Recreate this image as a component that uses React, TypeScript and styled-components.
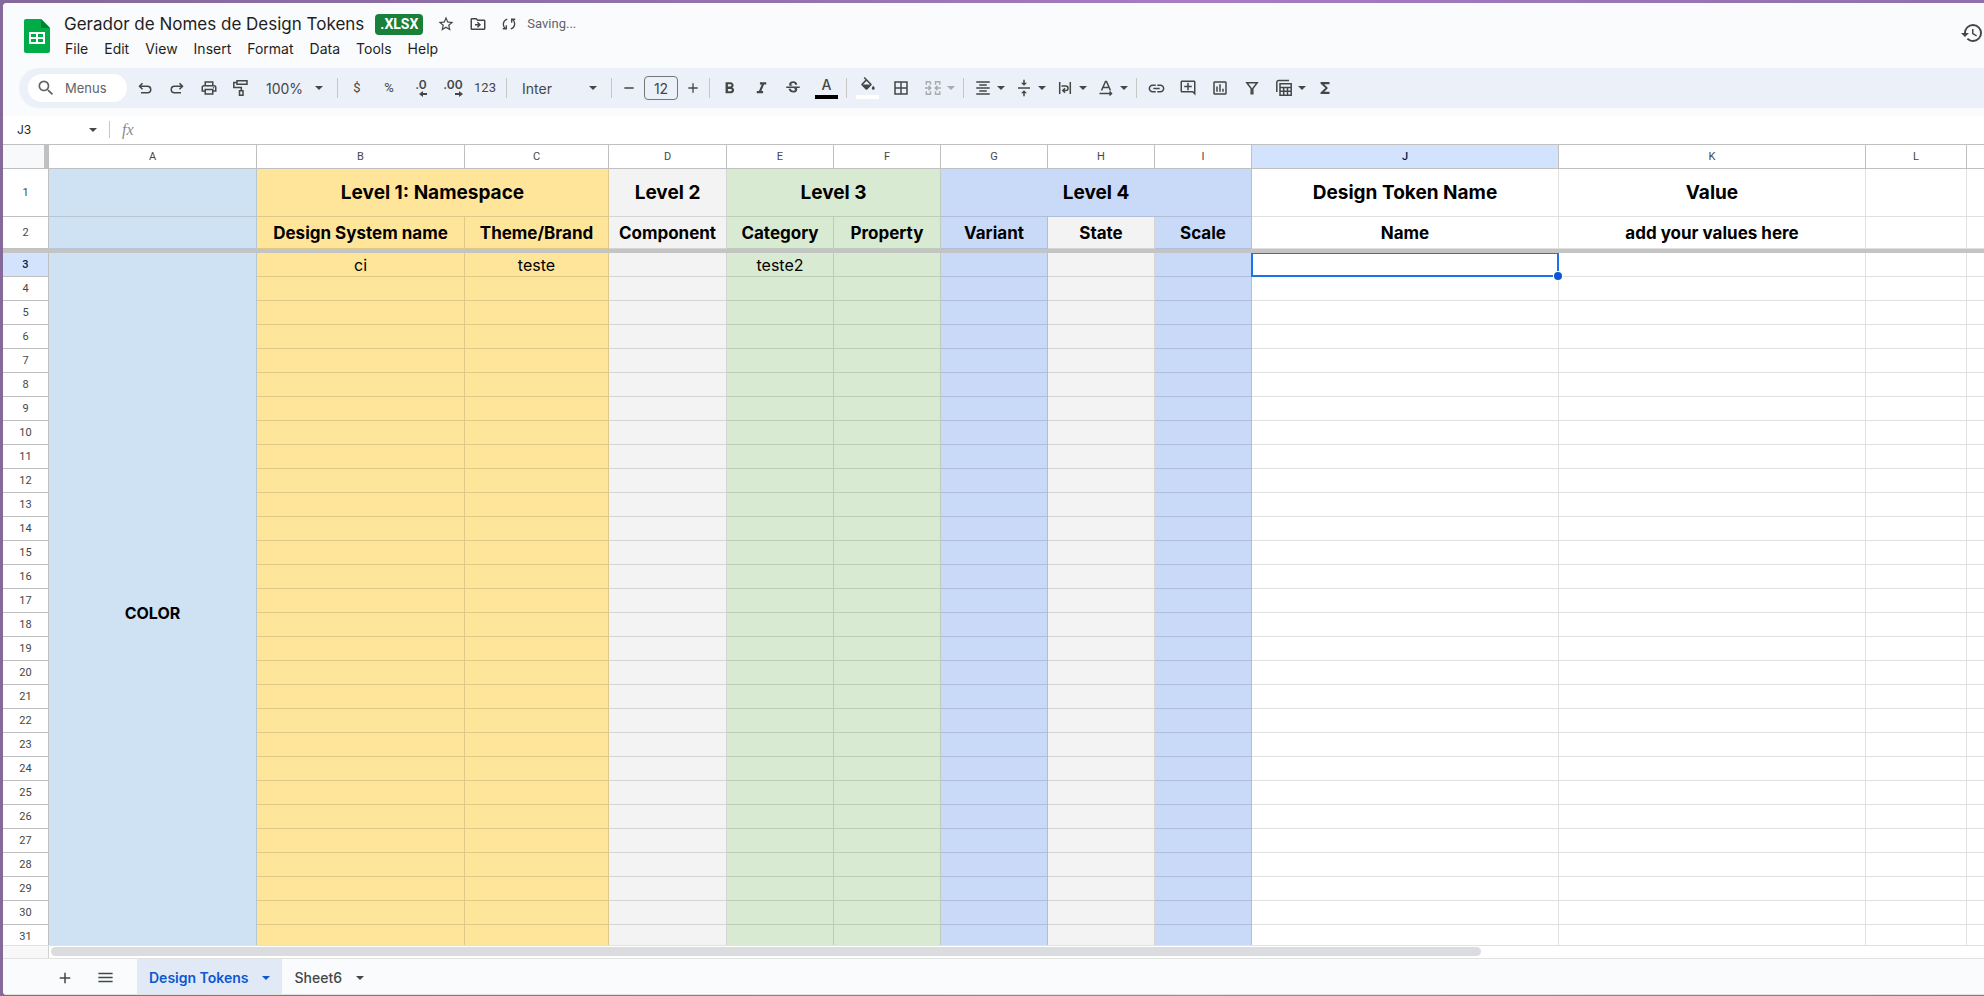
import React from "react";
import styled, { createGlobalStyle } from "styled-components";
import {
  MdAdd,
  MdBorderAll,
  MdFormatAlignCenter,
  MdFormatBold,
  MdFormatItalic,
  MdFunctions,
  MdHistory,
  MdLink,
  MdMenu,
  MdOutlineAddComment,
  MdOutlineDriveFileMove,
  MdOutlineFilterAlt,
  MdOutlineInsertChart,
  MdOutlinePrint,
  MdRemove,
  MdSearch,
  MdStarBorder,
  MdStrikethroughS,
  MdVerticalAlignCenter,
} from "react-icons/md";

const ui = '"Inter", "Liberation Sans", sans-serif';
const small = '"Roboto", "Liberation Sans", sans-serif';

const GlobalStyle = createGlobalStyle`
  *, *::before, *::after { box-sizing: border-box; }
  body { margin: 0; font-family: ${ui}; color: #1f1f1f; }
  button, input { font: inherit; color: inherit; border: 0; padding: 0; background: none; outline: 0; }
  svg { display: block; flex: none; }
`;

const Desktop = styled.div`
  height: 100vh;
  padding: 3px 0 1px 3px;
  background: linear-gradient(90deg, #84699a, #9472b0 40%, #a77cc4 60%, #8e70ad);
`;

const Window = styled.div`
  display: flex;
  flex-direction: column;
  height: 100%;
  overflow: hidden;
  border-radius: 4px 0 0 4px;
  background: #fff;
`;

const Header = styled.header`
  flex: none;
  height: 113px;
  padding-bottom: 8px;
  background: #f9fbfd;
  display: flex;
  flex-direction: column;
`;

const TopBar = styled.div`
  flex: 1;
  display: flex;
  align-items: flex-start;
  padding: 9px 0 0 21px;
`;

const LogoLink = styled.a`
  display: block;
  padding-top: 7px;
  margin-right: 8px;
`;

const Titles = styled.div`
  flex: 1;
`;

const TitleRow = styled.div`
  display: flex;
  align-items: center;
  height: 24px;
  padding: 0 6px;
  color: #444746;
`;

const DocTitle = styled.h1`
  margin: 0;
  font-size: 17px;
  font-weight: 400;
  line-height: 24px;
  color: #1f1f1f;
`;

const FileBadge = styled.span`
  margin: 0 14px 0 11px;
  padding: 0 5px;
  border-radius: 4px;
  background: #188038;
  color: #fff;
  font: 700 14px/21px ${small};
`;

const TitleButton = styled.button`
  margin-right: 14px;
`;

const SaveState = styled.span`
  margin-left: -4px;
  font: 13px/20px ${small};
  color: #5f6368;
`;

const MenuBar = styled.nav`
  display: flex;
  height: 25px;
  padding-top: 1px;
  margin-left: -1px;
`;

const MenuButton = styled.button`
  padding: 0 8px;
  font-size: 14px;
  line-height: 24px;
`;

const HistoryButton = styled.button`
  margin-top: 9px;
  color: #444746;
`;

const Toolbar = styled.div`
  display: flex;
  align-items: center;
  gap: 4px;
  height: 40px;
  margin-left: 16px;
  padding-left: 9px;
  border-radius: 20px 0 0 20px;
  background: #ecf0f9;
  color: #444746;
  white-space: nowrap;
`;

const SearchPill = styled.button`
  display: flex;
  align-items: center;
  gap: 9px;
  width: 99px;
  height: 28px;
  padding-left: 8px;
  border-radius: 14px;
  background: #fff;
  font-size: 13px;
  color: #5f6368;
`;

const Tool = styled.button<{ $wide?: boolean; $off?: boolean }>`
  display: flex;
  align-items: center;
  justify-content: center;
  flex: none;
  width: ${(p) => (p.$wide ? 31 : 28)}px;
  height: 28px;
  opacity: ${(p) => (p.$off ? 0.4 : 1)};
  font-size: 13px;
`;

const NumberTool = styled(Tool)`
  font: 13px/16px ${small};
`;

const MenuTool = styled(Tool)`
  width: 37px;
  justify-content: flex-start;
  padding-left: 5px;
  gap: 5px;
`;

const PickerTool = styled(Tool)<{ $w: number }>`
  width: ${(p) => p.$w}px;
  justify-content: space-between;
  padding: 0 7px;
  font-size: 14px;
`;

const FontTool = styled(PickerTool)`
  padding-left: 10px;
`;

const Divider = styled.span<{ $tight?: boolean }>`
  flex: none;
  width: 1px;
  height: 20px;
  margin: 0 1px 0 ${(p) => (p.$tight ? 0 : 3)}px;
  background: #c7c7c7;
`;

const SizeGroup = styled.div`
  display: flex;
  align-items: center;
  gap: 3px;
`;

const StepButton = styled.button`
  display: flex;
  justify-content: center;
  width: 24px;
`;

const SizeInput = styled.input`
  width: 34px;
  height: 24px;
  border: 1px solid #747775;
  border-radius: 4px;
  text-align: center;
  font-size: 14px;
`;

const ColorTool = styled.span<{ $bar: string }>`
  display: flex;
  flex-direction: column;
  align-items: center;
  justify-content: flex-start;
  width: 23px;
  height: 22px;
  border-bottom: 4px solid ${(p) => p.$bar};
  font-size: 14px;
  font-weight: 500;
  line-height: 16px;
`;

const Decimal = styled.span`
  display: flex;
  flex-direction: column;
  align-items: flex-end;
  font-size: 12px;
  font-weight: 600;
  line-height: 12px;
`;

const FormulaBar = styled.div`
  flex: none;
  display: flex;
  align-items: center;
  height: 29px;
  padding-bottom: 1px;
  border-bottom: 1px solid #c0c0c0;
  color: #444746;
`;

const NameBox = styled.input`
  width: 76px;
  padding-left: 14px;
  font-size: 12px;
  color: #1f1f1f;
`;

const NameDivider = styled(Divider)`
  height: 17px;
  margin: 0 12px 0 2px;
`;

const FormulaMark = styled.span`
  font: italic 16px/20px "Liberation Serif", serif;
  color: #8a8d8f;
`;

const FormulaInput = styled.input`
  flex: 1;
  padding-left: 8px;
`;

const GridArea = styled.main`
  flex: 1;
  min-height: 0;
  overflow: hidden;
  border-bottom: 1px solid #e1e1e1;
`;

const Sheet = styled.table`
  width: 100%;
  table-layout: fixed;
  border-collapse: separate;
  border-spacing: 0;

  th, td {
    padding: 0;
    text-align: center;
    vertical-align: middle;
    white-space: nowrap;
  }

  th:last-child, td:last-child {
    border-right: 0;
  }
`;

const Corner = styled.td`
  height: 24px;
  background: #f8f9fa;
  border-right: 5px solid #c0c0c0;
  border-bottom: 1px solid #c0c0c0;
`;

const Label = styled.th<{ $active?: boolean }>`
  border-right: 1px solid #c0c0c0;
  border-bottom: 1px solid #c0c0c0;
  background: ${(p) => (p.$active ? "#d3e3fd" : "#fff")};
  color: ${(p) => (p.$active ? "#041e49" : "#444746")};
  font: ${(p) => (p.$active ? 500 : 400)} 11px/12px ${small};
`;

const Row = styled.tr<{ $h: number }>`
  height: ${(p) => p.$h}px;
`;

const textSize = { level: 19, title: 17, group: 16 };

const Cell = styled.td<{ $fill: string; $kind?: keyof typeof textSize }>`
  position: relative;
  border-right: 1px solid rgba(0, 0, 0, 0.12);
  border-bottom: 1px solid rgba(0, 0, 0, 0.12);
  background: ${(p) => p.$fill};
  font-size: ${(p) => (p.$kind ? textSize[p.$kind] : 16)}px;
  font-weight: ${(p) => (p.$kind ? 700 : 400)};
  line-height: 20px;
  color: #000;
`;

const FreezeBar = styled.td`
  height: 4px;
  background: #c4c4c4;
`;

const Selection = styled.span`
  position: absolute;
  z-index: 1;
  inset: 0 -1px -1px -1px;
  border: 2px solid #1a73e8;
  border-top-width: 1px;

  &::after {
    content: "";
    position: absolute;
    right: -5px;
    bottom: -5px;
    width: 8px;
    height: 8px;
    border-radius: 50%;
    background: #0b57d0;
    box-shadow: 0 0 0 1px #fff;
  }
`;

const ScrollRow = styled.div`
  flex: none;
  display: flex;
  height: 12px;
`;

const ScrollCorner = styled.div`
  width: 46px;
  border-right: 1px solid #d0d0d0;
  background: #f8f8f8;
`;

const ScrollTrack = styled.div`
  flex: 1;
  padding: 1px 0 2px 2px;
`;

const ScrollThumb = styled.div`
  width: 74%;
  height: 9px;
  border-radius: 5px;
  background: #dadce0;
`;

const Footer = styled.footer`
  flex: none;
  display: flex;
  height: 37px;
  padding-left: 50px;
  border-top: 1px solid #e1e3e1;
  border-bottom: 1px solid #e1e3e1;
  background: #f9fbfd;
  color: #444746;
`;

const FooterButton = styled.button`
  display: flex;
  align-items: center;
  justify-content: center;
  width: 24px;
  margin-right: 16px;
  padding-top: 2px;
`;

const SheetTab = styled.button<{ $active?: boolean }>`
  display: flex;
  align-items: center;
  gap: 14px;
  padding: 2px 12px 0;
  background: ${(p) => (p.$active ? "#e1e9f7" : "none")};
  color: ${(p) => (p.$active ? "#0b57d0" : "#444746")};
  font-size: 14px;
  font-weight: ${(p) => (p.$active ? 600 : 500)};
`;

const TabList = styled.div`
  display: flex;
  margin-left: 4px;
`;

const Caret = () => (
  <svg width="8" height="4" viewBox="0 0 8 4" fill="currentColor" aria-hidden="true">
    <path d="M0 0h8L4 4z" />
  </svg>
);

const Drawn = ({ children, size = 18 }: { children: React.ReactNode; size?: number }) => (
  <svg width={size} height={size} viewBox="0 0 18 18" fill="none" stroke="currentColor" strokeWidth="1.5" aria-hidden="true">
    {children}
  </svg>
);

const UndoIcon = () => (
  <Drawn>
    <path d="M6.500 4.300 3.500 7.300l3 3M3.500 7.300H11.500a3.200 3.200 0 0 1 0 6.500H5" />
  </Drawn>
);

const RedoIcon = () => (
  <Drawn>
    <path d="m11.500 4.300 3 3-3 3M14.500 7.300H6.500a3.200 3.200 0 0 0 0 6.500H13" />
  </Drawn>
);

const RollerIcon = () => (
  <Drawn>
    <path d="M5 1.800h10v3.500H5zM5 3.500H1.800V8.500h7.500v3M7.500 11.800h3.500v4.500H7.500z" />
  </Drawn>
);

const BucketIcon = () => (
  <svg width="18" height="15" viewBox="0 0 24 20" fill="currentColor" fillRule="evenodd" aria-hidden="true">
    <path d="M16.560 8.940 7.620 0 6.210 1.410l2.380 2.380-5.150 5.150a1.490 1.490 0 0 0 0 2.120l5.500 5.500c.290.290.680.440 1.060.440s.770-.150 1.060-.440l5.500-5.500c.590-.580.590-1.530 0-2.120zM5.210 10 10 5.210 14.790 10zM19 11.500s-2 2.170-2 3.500c0 1.100.900 2 2 2s2-.900 2-2c0-1.330-2-3.500-2-3.500z" />
  </svg>
);

const MergeIcon = () => (
  <Drawn>
    <path d="M6.500 2.800H2.300v3M2.300 12.200v3h4.200v-3M6.500 2.800v3M11.500 5.800v-3h4.200v3M11.500 12.200v3h4.200v-3M1 9h5M17 9h-5M4.500 6.800 6.700 9l-2.200 2.200M13.500 6.800 11.300 9l2.200 2.200" />
  </Drawn>
);

const WrapIcon = () => (
  <Drawn>
    <path d="M3.700 3v12M14.300 3v12M5.500 7h4.300a2.200 2.200 0 0 1 0 4.500H7M9 9.300l-2.200 2.200L9 13.700" />
  </Drawn>
);

const RotateIcon = () => (
  <Drawn>
    <path d="M4.500 11.500 8.500 2.500h1l4 9M6 8.500h6M2.500 14.500h12M12.500 12.500l2 2-2 2" />
  </Drawn>
);

const TableViewsIcon = () => (
  <Drawn>
    <path d="M1.800 13V3.500a2 2 0 0 1 2-2H14M5 4.800h11.200v11.400H5zM5 8.500h11.200M5 12.300h11.200M8.700 8.500v7.700M12.500 8.500v7.700" />
  </Drawn>
);

const FilterIcon = () => (
  <Drawn>
    <path d="M3.800 3.800h10.400L9.800 9.500v5.200H8.200V9.500z" />
  </Drawn>
);

const SavingIcon = () => (
  <Drawn size={16}>
    <path d="M7 3.500A6 6 0 0 0 5 14M2 14.300h4V10.500M11 14.500A6 6 0 0 0 13 4M16 3.700h-4V7.500" />
  </Drawn>
);

const ArrowMark = ({ right }: { right?: boolean }) => (
  <svg width="8" height="6" viewBox="0 0 8 6" fill="currentColor" aria-hidden="true">
    <path d={right ? "M0 2h4V0l4 3-4 3V4H0z" : "M8 2H4V0L0 3l4 3V4h4z"} />
  </svg>
);

const SheetsLogo = () => (
  <svg width="26" height="34" viewBox="0 0 26 34" aria-hidden="true">
    <path d="M2 0h15l9 9v23a2 2 0 0 1-2 2H2a2 2 0 0 1-2-2V2a2 2 0 0 1 2-2z" fill="#00ac47" />
    <path d="M17 0v7a2 2 0 0 0 2 2h7z" fill="#00832d" />
    <path d="M5 13v12h16V13zm2 2h5v3H7zm7 0h5v3h-5zm-7 5h5v3H7zm7 0h5v3h-5z" fill="#fff" fillRule="evenodd" />
  </svg>
);

const menus = ["File", "Edit", "View", "Insert", "Format", "Data", "Tools", "Help"];

const sky = "#cfe2f3";
const yellow = "#ffe599";
const grey = "#f3f3f3";
const green = "#d9ead3";
const blue = "#c9daf8";
const white = "#ffffff";

const columns = [
  { id: "A", width: 208, fill: sky, title: "" },
  { id: "B", width: 208, fill: yellow, title: "Design System name" },
  { id: "C", width: 144, fill: yellow, title: "Theme/Brand" },
  { id: "D", width: 118, fill: grey, title: "Component" },
  { id: "E", width: 107, fill: green, title: "Category" },
  { id: "F", width: 107, fill: green, title: "Property" },
  { id: "G", width: 107, fill: blue, title: "Variant" },
  { id: "H", width: 107, fill: grey, title: "State" },
  { id: "I", width: 97, fill: blue, title: "Scale" },
  { id: "J", width: 307, fill: white, title: "Name" },
  { id: "K", width: 307, fill: white, title: "add your values here" },
  { id: "L", width: 101, fill: white, title: "" },
  { id: "M", width: undefined, fill: white, title: "" },
];

const levels = [
  { text: "", span: 1, fill: sky },
  { text: "Level 1: Namespace", span: 2, fill: yellow },
  { text: "Level 2", span: 1, fill: grey },
  { text: "Level 3", span: 2, fill: green },
  { text: "Level 4", span: 3, fill: blue },
  { text: "Design Token Name", span: 1, fill: white },
  { text: "Value", span: 1, fill: white },
  { text: "", span: 1, fill: white },
  { text: "", span: 1, fill: white },
];

const values: Record<string, string> = { B3: "ci", C3: "teste", E3: "teste2" };
const selected = "J3";
const firstRow = 3;
const lastNumbered = 31;
const groupRows = 30;

export default function App() {
  const rows = Array.from({ length: groupRows }, (_, i) => firstRow + i);

  return (
    <Desktop>
      <GlobalStyle />
      <Window>
        <Header>
          <TopBar>
            <LogoLink href="#" aria-label="Sheets home">
              <SheetsLogo />
            </LogoLink>
            <Titles>
              <TitleRow>
                <DocTitle>Gerador de Nomes de Design Tokens</DocTitle>
                <FileBadge>.XLSX</FileBadge>
                <TitleButton aria-label="Star"><MdStarBorder size={18} /></TitleButton>
                <TitleButton aria-label="Move"><MdOutlineDriveFileMove size={18} /></TitleButton>
                <TitleButton aria-label="Saving status"><SavingIcon /></TitleButton>
                <SaveState>Saving...</SaveState>
              </TitleRow>
              <MenuBar>
                {menus.map((m) => <MenuButton key={m}>{m}</MenuButton>)}
              </MenuBar>
            </Titles>
            <HistoryButton aria-label="Version history"><MdHistory size={24} /></HistoryButton>
          </TopBar>
          <Toolbar role="toolbar">
            <SearchPill><MdSearch size={20} />Menus</SearchPill>
            <Tool aria-label="Undo"><UndoIcon /></Tool>
            <Tool aria-label="Redo"><RedoIcon /></Tool>
            <Tool aria-label="Print"><MdOutlinePrint size={18} /></Tool>
            <Tool aria-label="Paint format"><RollerIcon /></Tool>
            <PickerTool $w={71}>100%<Caret /></PickerTool>
            <Divider />
            <NumberTool>$</NumberTool>
            <NumberTool>%</NumberTool>
            <Tool aria-label="Decrease decimal places"><Decimal>.0<ArrowMark /></Decimal></Tool>
            <Tool aria-label="Increase decimal places"><Decimal>.00<ArrowMark right /></Decimal></Tool>
            <NumberTool>123</NumberTool>
            <Divider />
            <FontTool $w={92}>Inter<Caret /></FontTool>
            <Divider />
            <SizeGroup>
              <StepButton aria-label="Decrease font size"><MdRemove size={16} /></StepButton>
              <SizeInput aria-label="Font size" defaultValue="12" />
              <StepButton aria-label="Increase font size"><MdAdd size={16} /></StepButton>
            </SizeGroup>
            <Divider $tight />
            <Tool aria-label="Bold"><MdFormatBold size={19} /></Tool>
            <Tool aria-label="Italic"><MdFormatItalic size={19} /></Tool>
            <Tool aria-label="Strikethrough"><MdStrikethroughS size={18} /></Tool>
            <Tool $wide aria-label="Text color"><ColorTool $bar="#000">A</ColorTool></Tool>
            <Divider $tight />
            <Tool $wide aria-label="Fill color"><ColorTool $bar="#fff"><BucketIcon /></ColorTool></Tool>
            <Tool aria-label="Borders"><MdBorderAll size={18} /></Tool>
            <MenuTool $off aria-label="Merge cells"><MergeIcon /><Caret /></MenuTool>
            <Divider />
            <MenuTool aria-label="Horizontal align"><MdFormatAlignCenter size={18} /><Caret /></MenuTool>
            <MenuTool aria-label="Vertical align"><MdVerticalAlignCenter size={18} /><Caret /></MenuTool>
            <MenuTool aria-label="Text wrapping"><WrapIcon /><Caret /></MenuTool>
            <MenuTool aria-label="Text rotation"><RotateIcon /><Caret /></MenuTool>
            <Divider />
            <Tool aria-label="Insert link"><MdLink size={19} /></Tool>
            <Tool aria-label="Insert comment"><MdOutlineAddComment size={18} /></Tool>
            <Tool aria-label="Insert chart"><MdOutlineInsertChart size={18} /></Tool>
            <Tool aria-label="Create a filter"><FilterIcon /></Tool>
            <MenuTool aria-label="Table views"><TableViewsIcon /><Caret /></MenuTool>
            <Tool aria-label="Functions"><MdFunctions size={18} /></Tool>
          </Toolbar>
        </Header>

        <FormulaBar>
          <NameBox aria-label="Name box" defaultValue="J3" />
          <Tool aria-label="Named ranges"><Caret /></Tool>
          <NameDivider />
          <FormulaMark>fx</FormulaMark>
          <FormulaInput aria-label="Formula" />
        </FormulaBar>

        <GridArea>
          <Sheet>
            <colgroup>
              <col width={46} />
              {columns.map((c) => <col key={c.id} width={c.width} />)}
            </colgroup>
            <thead>
              <tr>
                <Corner />
                {columns.map((c) => (
                  <Label key={c.id} scope="col" $active={c.id === "J"}>{c.id === "M" ? "" : c.id}</Label>
                ))}
              </tr>
            </thead>
            <tbody>
              <Row $h={48}>
                <Label scope="row">1</Label>
                {levels.map((l, i) => (
                  <Cell key={i} colSpan={l.span} $fill={l.fill} $kind="level">{l.text}</Cell>
                ))}
              </Row>
              <Row $h={32}>
                <Label scope="row">2</Label>
                {columns.map((c) => <Cell key={c.id} $fill={c.fill} $kind="title">{c.title}</Cell>)}
              </Row>
              <tr aria-hidden="true">
                <FreezeBar colSpan={columns.length + 1} />
              </tr>
              {rows.map((n) => (
                <Row key={n} $h={24}>
                  <Label scope="row" $active={n === firstRow}>{n <= lastNumbered ? n : ""}</Label>
                  {n === firstRow && <Cell rowSpan={groupRows} $fill={sky} $kind="group">COLOR</Cell>}
                  {columns.slice(1).map((c) => (
                    <Cell key={c.id} $fill={c.fill}>
                      {values[c.id + n]}
                      {c.id + n === selected && <Selection />}
                    </Cell>
                  ))}
                </Row>
              ))}
            </tbody>
          </Sheet>
        </GridArea>

        <ScrollRow>
          <ScrollCorner />
          <ScrollTrack><ScrollThumb /></ScrollTrack>
        </ScrollRow>
        <Footer>
          <FooterButton aria-label="Add sheet"><MdAdd size={18} /></FooterButton>
          <FooterButton aria-label="All sheets"><MdMenu size={19} /></FooterButton>
          <TabList>
            <SheetTab $active>Design Tokens<Caret /></SheetTab>
            <SheetTab>Sheet6<Caret /></SheetTab>
          </TabList>
        </Footer>
      </Window>
    </Desktop>
  );
}
